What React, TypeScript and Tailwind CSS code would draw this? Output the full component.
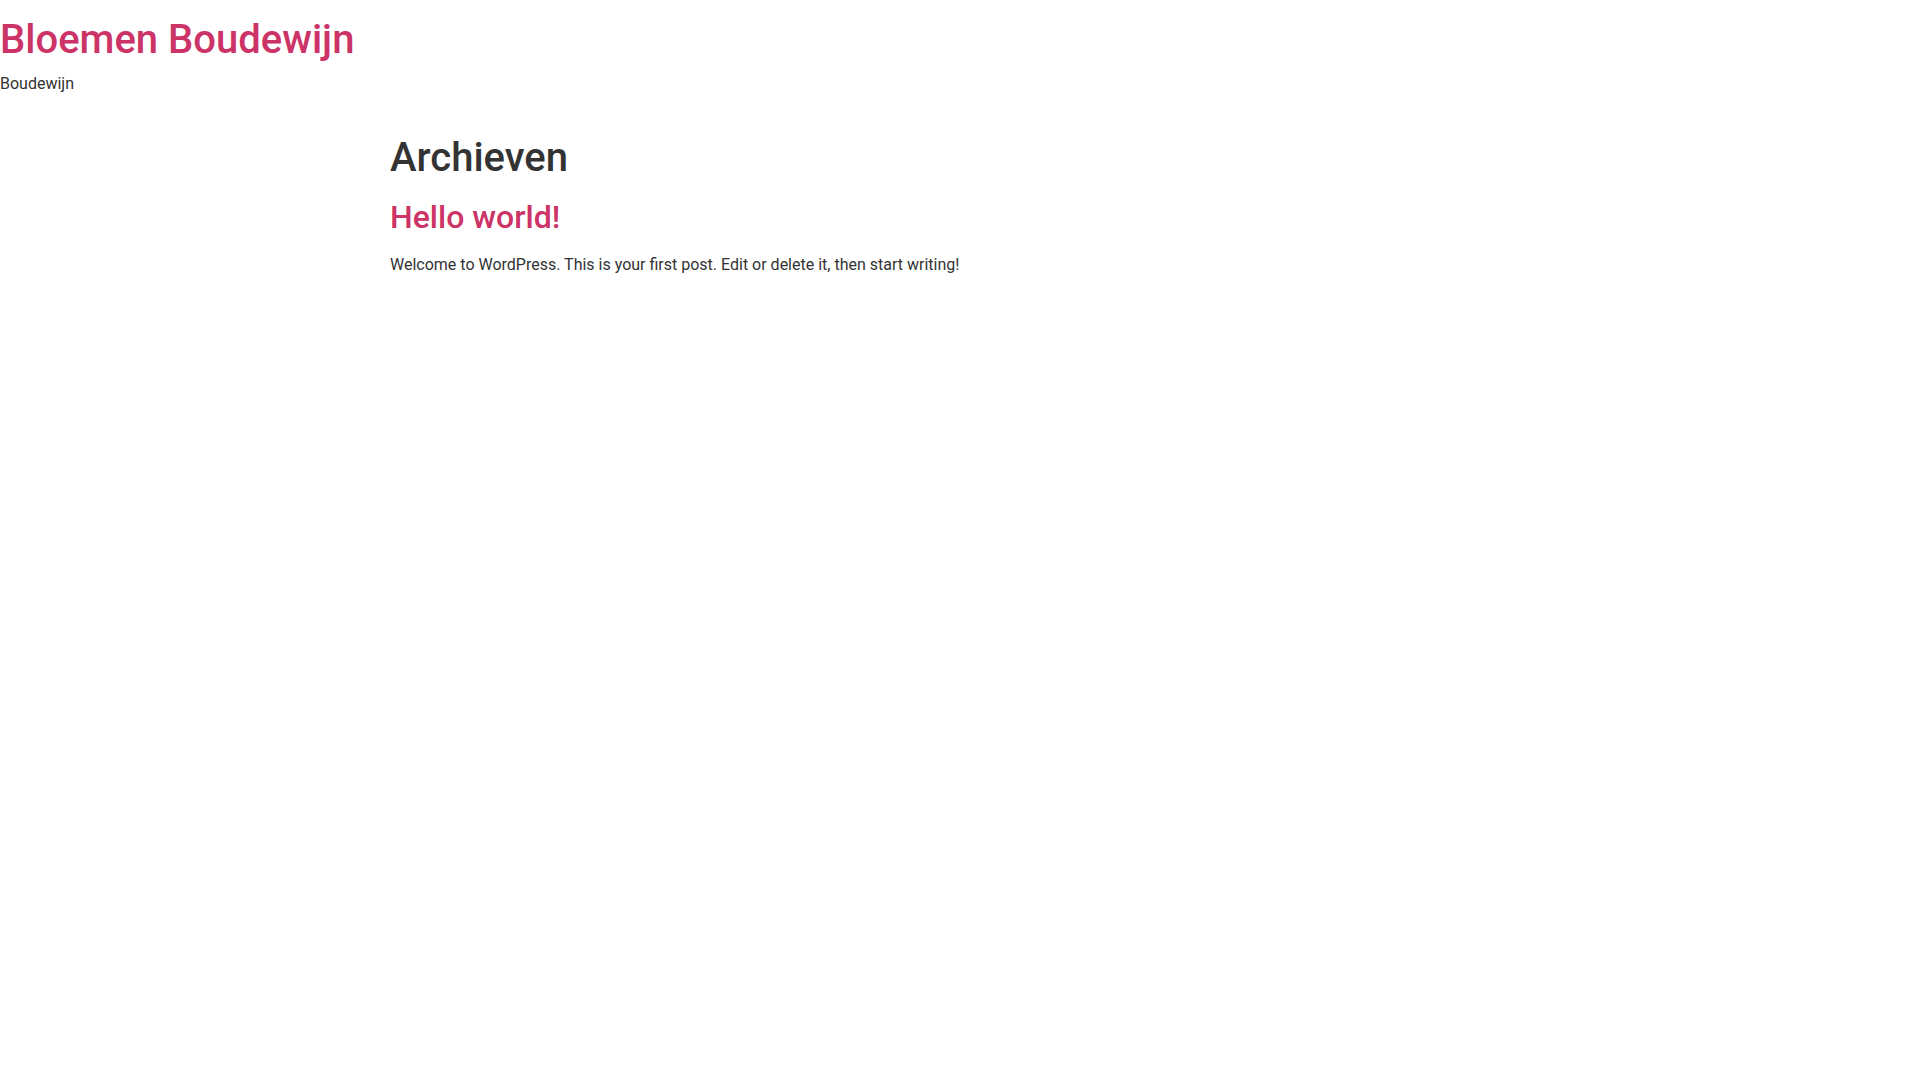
import React from 'react';

const App: React.FC = () => {
  return (
    <div className="min-h-screen bg-white text-[#333333] font-['Roboto',sans-serif]">
      <header className="pt-4">
        <h1 className="text-[40px] leading-[1.2] font-medium text-[#cc3366] mb-2">
          <a href="#">Bloemen Boudewijn</a>
        </h1>
        <p className="text-base leading-[1.5]">Boudewijn</p>
      </header>

      <main className="max-w-[1140px] mx-auto mt-[38px]">
        <h1 className="text-[40px] leading-[1.2] font-medium mb-4">Archieven</h1>
        <article>
          <h2 className="text-[32px] leading-[1.2] font-medium text-[#cc3366] mb-[17px]">
            <a href="#">Hello world!</a>
          </h2>
          <p className="text-base leading-[1.5]">
            Welcome to WordPress. This is your first post. Edit or delete it, then start writing!
          </p>
        </article>
      </main>
    </div>
  );
};

export default App;
